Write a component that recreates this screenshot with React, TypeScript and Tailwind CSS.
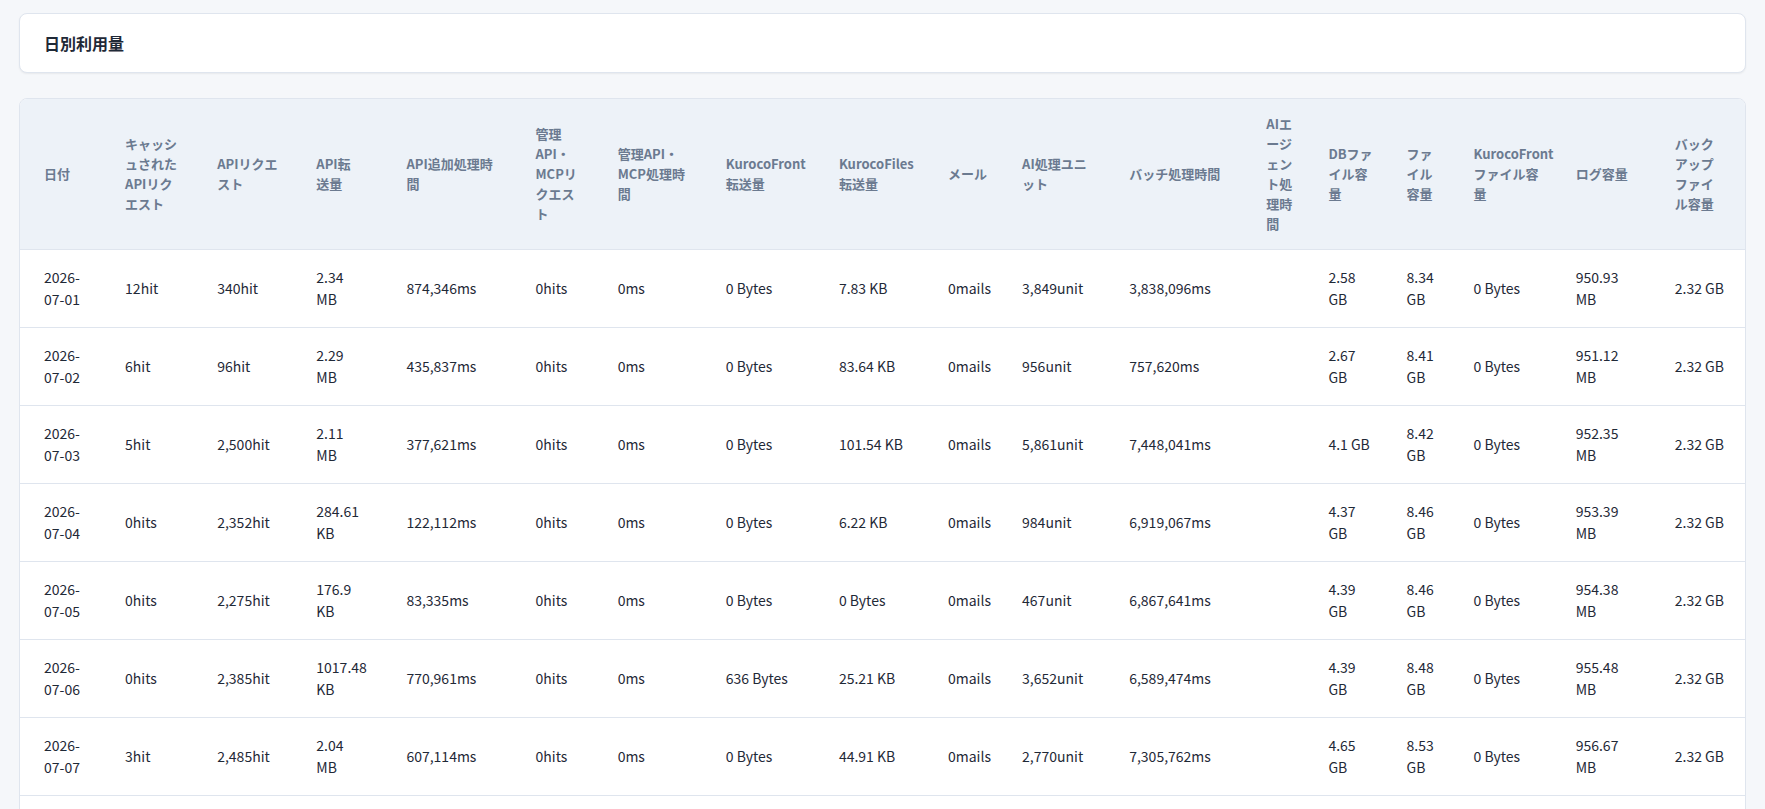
const COLS = [93, 92, 99, 90, 129, 82, 108, 113, 109, 74, 107, 137, 62, 78, 67, 102, 99, 82]
const WIDE_PAD = [0, 3, 16]

const HEAD = [
  '日付', 'キャッシュされたAPIリクエスト', 'APIリクエスト', 'API転送量', 'API追加処理時間',
  '管理API・MCPリクエスト', '管理API・MCP処理時間', 'KurocoFront転送量', 'KurocoFiles転送量',
  'メール', 'AI処理ユニット', 'バッチ処理時間', 'AIエージェント処理時間', 'DBファイル容量',
  'ファイル容量', 'KurocoFrontファイル容量', 'ログ容量', 'バックアップファイル容量',
]

const ROWS: string[][] = [
  ['2026-07-01','12hit','340hit','2.34 MB','874,346ms','0hits','0ms','0 Bytes','7.83 KB','0mails','3,849unit','3,838,096ms','','2.58 GB','8.34 GB','0 Bytes','950.93 MB','2.32 GB'],
  ['2026-07-02','6hit','96hit','2.29 MB','435,837ms','0hits','0ms','0 Bytes','83.64 KB','0mails','956unit','757,620ms','','2.67 GB','8.41 GB','0 Bytes','951.12 MB','2.32 GB'],
  ['2026-07-03','5hit','2,500hit','2.11 MB','377,621ms','0hits','0ms','0 Bytes','101.54 KB','0mails','5,861unit','7,448,041ms','','4.1 GB','8.42 GB','0 Bytes','952.35 MB','2.32 GB'],
  ['2026-07-04','0hits','2,352hit','284.61 KB','122,112ms','0hits','0ms','0 Bytes','6.22 KB','0mails','984unit','6,919,067ms','','4.37 GB','8.46 GB','0 Bytes','953.39 MB','2.32 GB'],
  ['2026-07-05','0hits','2,275hit','176.9 KB','83,335ms','0hits','0ms','0 Bytes','0 Bytes','0mails','467unit','6,867,641ms','','4.39 GB','8.46 GB','0 Bytes','954.38 MB','2.32 GB'],
  ['2026-07-06','0hits','2,385hit','1017.48 KB','770,961ms','0hits','0ms','636 Bytes','25.21 KB','0mails','3,652unit','6,589,474ms','','4.39 GB','8.48 GB','0 Bytes','955.48 MB','2.32 GB'],
  ['2026-07-07','3hit','2,485hit','2.04 MB','607,114ms','0hits','0ms','0 Bytes','44.91 KB','0mails','2,770unit','7,305,762ms','','4.65 GB','8.53 GB','0 Bytes','956.67 MB','2.32 GB'],
  ['2026-07-08','2hit','1,902hit','1.98 MB','512,408ms','0hits','0ms','0 Bytes','12.40 KB','0mails','1,204unit','5,114,930ms','','4.66 GB','8.55 GB','0 Bytes','957.80 MB','2.32 GB'],
]

const pad = (i: number) =>
  `${i===0?'pl-6':'pl-3'} ${WIDE_PAD.includes(i)?'pr-8':'pr-5'}`

export default function App() {
  return (
    <div className="min-h-screen bg-[#f5f7fa] px-[19px] pt-[13px] text-[#1f2937]"
      style={{ fontFamily: '"Noto Sans CJK JP", "Noto Sans", sans-serif' }}>
      <div className="bg-white border border-[#dfe5ee] rounded-lg shadow-[0_1px_2px_rgba(0,0,0,0.06)] h-[60px] flex items-center px-6">
        <h1 className="text-[16px] font-bold text-[#1f2937]">日別利用量</h1>
      </div>
      <div className="mt-[25px] bg-white border border-[#dfe5ee] rounded-lg overflow-hidden">
        <table className="table-fixed w-full border-collapse">
          <colgroup>
            {COLS.map((w, i) => <col key={i} style={{ width: w }} />)}
          </colgroup>
          <thead className="bg-[#edf2f8]">
            <tr className="h-[150px] border-b border-[#dfe5ee]">
              {HEAD.map((h, i) => (
                <th key={i} className={`${pad(i)} text-left align-middle text-[13px] leading-[20px] font-bold text-[#6b7a90]`}>{h}</th>
              ))}
            </tr>
          </thead>
          <tbody>
            {ROWS.map((r, ri) => (
              <tr key={ri} className="h-[78px] border-b border-[#dfe5ee]">
                {r.map((c, i) => (
                  <td key={i} className={`${pad(i)} align-middle text-[14px] leading-[22px] text-[#1f2937]`}>{c}</td>
                ))}
              </tr>
            ))}
          </tbody>
        </table>
      </div>
    </div>
  )
}
